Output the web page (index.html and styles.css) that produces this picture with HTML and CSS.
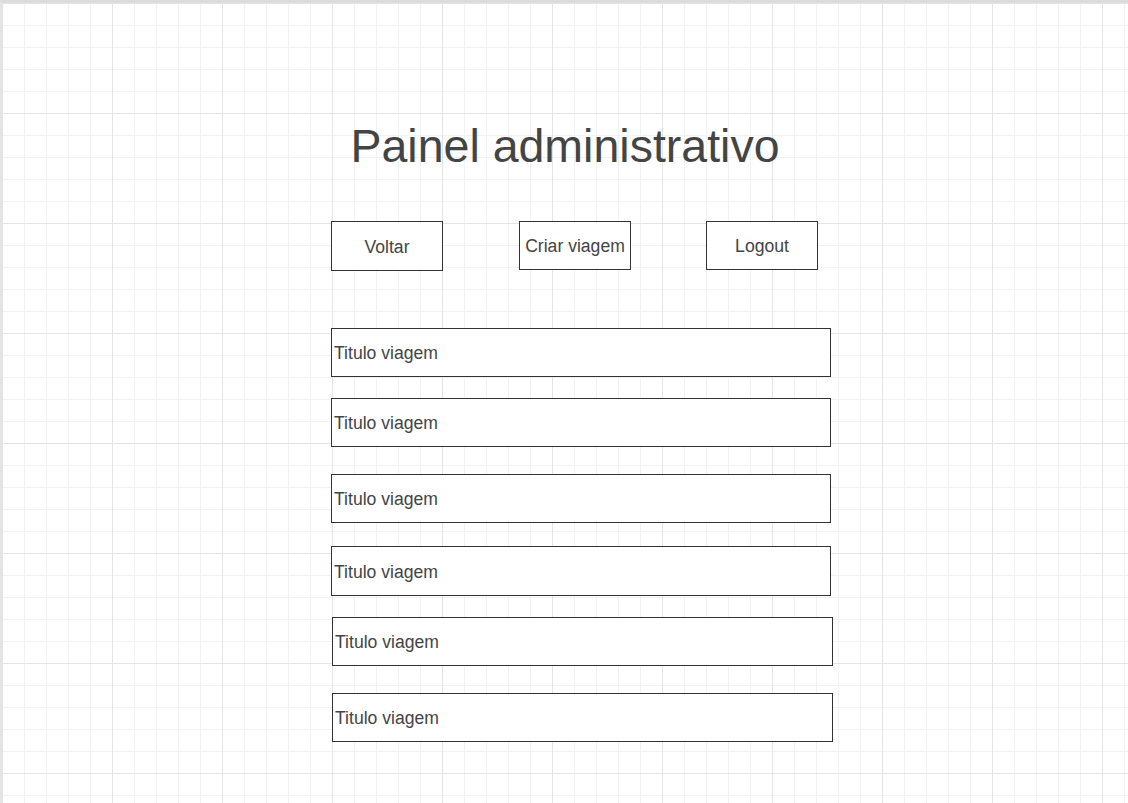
FILE: index.html
```html
<!DOCTYPE html>
<html lang="pt">
<head>
<meta charset="utf-8">
<title>Painel administrativo</title>
<link rel="stylesheet" href="styles.css">
</head>
<body>
<main class="canvas">
  <h1 class="title">Painel administrativo</h1>
  <div class="content">
    <div class="buttons">
      <div class="btn btn-tall">Voltar</div>
      <div class="btn">Criar viagem</div>
      <div class="btn">Logout</div>
    </div>
    <ul class="trips">
      <li class="trip trip-1">Titulo viagem</li>
      <li class="trip trip-2">Titulo viagem</li>
      <li class="trip trip-3">Titulo viagem</li>
      <li class="trip trip-4">Titulo viagem</li>
      <li class="trip trip-5 shifted">Titulo viagem</li>
      <li class="trip trip-6 shifted">Titulo viagem</li>
    </ul>
  </div>
</main>
</body>
</html>
```

FILE: styles.css
```css
html, body {
  margin: 0;
  padding: 0;
  height: 100%;
}

body {
  background: #ffffff;
  font-family: "Liberation Sans", Arial, sans-serif;
  color: #444444;
}

.canvas {
  box-sizing: border-box;
  min-height: 100vh;
  border-top: 3px solid #dcdcdc;
  border-left: 2px solid #e4e4e4;
  padding-top: 117px;
  background-color: #ffffff;
  background-image:
    linear-gradient(to right, #e4e4e4 1px, transparent 1px),
    linear-gradient(to bottom, #e4e4e4 1px, transparent 1px),
    linear-gradient(to right, #f2f2f2 1px, transparent 1px),
    linear-gradient(to bottom, #f2f2f2 1px, transparent 1px);
  background-size: 110px 110px, 110px 110px, 22px 22px, 22px 22px;
  background-position: 0 0, 0 0, 0 0, 0 0;
}

.title {
  margin: 0;
  font-weight: normal;
  font-size: 46.5px;
  line-height: 52px;
  text-align: center;
  color: #444444;
}

.content {
  padding-left: 329px;
}

.buttons {
  display: flex;
  align-items: flex-start;
  gap: 76px;
  margin-top: 49px;
}

.btn {
  box-sizing: border-box;
  width: 112px;
  height: 49px;
  border: 1px solid #333333;
  background: #ffffff;
  display: flex;
  align-items: center;
  justify-content: center;
  padding-top: 2px;
  font-size: 17.6px;
  color: #444444;
  white-space: nowrap;
}

.btn-tall {
  height: 50px;
}

.btn + .btn + .btn {
  margin-left: -1px;
}

.trips {
  list-style: none;
  margin: 57px 0 0 0;
  padding: 0;
  display: flex;
  flex-direction: column;
}

.trip {
  box-sizing: border-box;
  width: 500px;
  height: 49px;
  border: 1px solid #333333;
  background: #ffffff;
  display: flex;
  align-items: center;
  padding-left: 2px;
  padding-top: 2px;
  font-size: 17.6px;
  color: #444444;
  white-space: nowrap;
}

.trip-2 { margin-top: 21px; }
.trip-3 { margin-top: 27px; }
.trip-4 { margin-top: 23px; height: 50px; }
.trip-5 { margin-top: 21px; }
.trip-6 { margin-top: 27px; }

.shifted {
  margin-left: 1px;
  width: 501px;
}
```
